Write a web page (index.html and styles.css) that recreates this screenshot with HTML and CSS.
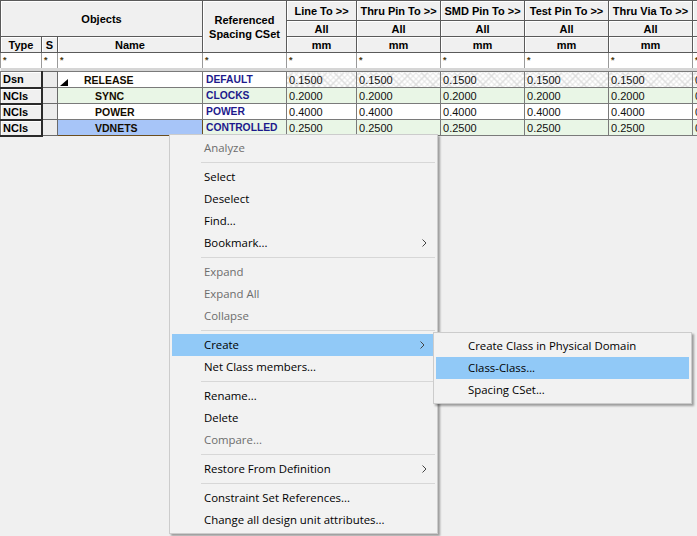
FILE: index.html
```html
<!DOCTYPE html>
<html lang="en">
<head>
    <meta charset="UTF-8">
    <title>Constraint Manager - Spacing</title>
    <link rel="stylesheet" href="styles.css">
</head>
<body>
<section class="sheet">
    <table class="grid">
        <colgroup>
            <col class="c-type"><col class="c-s"><col class="c-name"><col class="c-ref">
            <col class="c-line"><col class="c-val"><col class="c-val"><col class="c-val"><col class="c-val"><col class="c-val">
        </colgroup>
        <thead>
        <tr class="h-top">
            <th colspan="3" rowspan="2">Objects</th>
            <th rowspan="3" class="ref-head">Referenced<br>Spacing CSet</th>
            <th>Line To &gt;&gt;</th>
            <th>Thru Pin To &gt;&gt;</th>
            <th>SMD Pin To &gt;&gt;</th>
            <th>Test Pin To &gt;&gt;</th>
            <th>Thru Via To &gt;&gt;</th>
            <th></th>
        </tr>
        <tr class="h-mid">
            <th>All</th><th>All</th><th>All</th><th>All</th><th>All</th><th></th>
        </tr>
        <tr class="h-mid">
            <th>Type</th><th>S</th><th>Name</th>
            <th>mm</th><th>mm</th><th>mm</th><th>mm</th><th>mm</th><th></th>
        </tr>
        </thead>
        <tbody>
        <tr class="filter">
            <td>*</td><td>*</td><td>*</td><td>*</td><td>*</td><td>*</td><td>*</td><td>*</td><td>*</td><td>*</td>
        </tr>
        <tr class="gap"><td colspan="10"></td></tr>
        <tr class="row">
            <td class="type">Dsn</td><td class="s"></td>
            <td class="name lvl0"><svg class="twist" width="8" height="7" viewBox="0 0 8 7"><polygon points="8,0 8,7 0,7" fill="#000"/></svg>RELEASE</td>
            <td class="ref">DEFAULT</td>
            <td class="val hatch">0.1500</td><td class="val hatch">0.1500</td><td class="val hatch">0.1500</td><td class="val hatch">0.1500</td><td class="val hatch">0.1500</td><td class="val hatch">0</td>
        </tr>
        <tr class="row green">
            <td class="type">NCls</td><td class="s"></td>
            <td class="name lvl1">SYNC</td>
            <td class="ref">CLOCKS</td>
            <td class="val">0.2000</td><td class="val">0.2000</td><td class="val">0.2000</td><td class="val">0.2000</td><td class="val">0.2000</td><td class="val">0</td>
        </tr>
        <tr class="row">
            <td class="type">NCls</td><td class="s"></td>
            <td class="name lvl1">POWER</td>
            <td class="ref">POWER</td>
            <td class="val">0.4000</td><td class="val">0.4000</td><td class="val">0.4000</td><td class="val">0.4000</td><td class="val">0.4000</td><td class="val">0</td>
        </tr>
        <tr class="row green">
            <td class="type">NCls</td><td class="s"></td>
            <td class="name lvl1 picked">VDNETS</td>
            <td class="ref">CONTROLLED</td>
            <td class="val">0.2500</td><td class="val">0.2500</td><td class="val">0.2500</td><td class="val">0.2500</td><td class="val">0.2500</td><td class="val">0</td>
        </tr>
        </tbody>
    </table>
</section>

<div class="menu main-menu">
    <div class="item off">Analyze</div>
    <div class="sep"></div>
    <div class="item">Select</div>
    <div class="item">Deselect</div>
    <div class="item">Find...</div>
    <div class="item">Bookmark...<svg class="arrow" width="5" height="8" viewBox="0 0 5 8"><polyline points="0.5,0.5 4,4 0.5,7.5" fill="none" stroke="#444" stroke-width="1"/></svg></div>
    <div class="sep"></div>
    <div class="item off">Expand</div>
    <div class="item off">Expand All</div>
    <div class="item off">Collapse</div>
    <div class="sep"></div>
    <div class="item hot">Create<svg class="arrow" width="5" height="8" viewBox="0 0 5 8"><polyline points="0.5,0.5 4,4 0.5,7.5" fill="none" stroke="#444" stroke-width="1"/></svg></div>
    <div class="item">Net Class members...</div>
    <div class="sep"></div>
    <div class="item">Rename...</div>
    <div class="item">Delete</div>
    <div class="item off">Compare...</div>
    <div class="sep"></div>
    <div class="item">Restore From Definition<svg class="arrow" width="5" height="8" viewBox="0 0 5 8"><polyline points="0.5,0.5 4,4 0.5,7.5" fill="none" stroke="#444" stroke-width="1"/></svg></div>
    <div class="sep"></div>
    <div class="item">Constraint Set References...</div>
    <div class="item">Change all design unit attributes...</div>
</div>

<div class="menu sub-menu">
    <div class="item">Create Class in Physical Domain</div>
    <div class="item hot">Class-Class...</div>
    <div class="item">Spacing CSet...</div>
</div>
</body>
</html>
```

FILE: styles.css
```css
html, body{ margin: 0; height: 100%;}
body{ background: #f0f0f0; overflow: hidden; position: relative;
    font-family: "Liberation Sans", Arial, sans-serif;}

/* ---- grid ---- */
.sheet{ width: 697px; overflow: hidden;}
.grid{ border-collapse: collapse; table-layout: fixed; width: 776px; font-size: 11px;}
.c-type{ width: 41px;}
.c-s{ width: 16px;}
.c-name{ width: 145px;}
.c-ref{ width: 84px;}
.c-line{ width: 70px;}
.c-val{ width: 84px;}

.grid th, .grid td{ padding: 0 3px; overflow: hidden; white-space: nowrap; box-sizing: border-box;}

.grid th{ background: #f0f0f0; border: 1px solid #5a5a5a; font-weight: bold; color: #000;
    box-shadow: inset 1px 1px 0 #fff; text-align: center;}
.h-top th{ height: 20px; line-height: 18px;}
.h-mid th{ height: 16px; line-height: 14px;}
.h-top th[rowspan="2"]{ vertical-align: middle;}
.ref-head{ line-height: 14px !important; padding-top: 2px;}

.filter td{ height: 15px; background: #fff; border: 1px solid #9a9a9a; border-bottom: 0;
    font-size: 9px; font-weight: bold; line-height: 10px; vertical-align: top; color: #4a3a10; padding: 2px 2px 0;}
.gap td{ height: 4px; padding: 0; background: #d6d6d6; border: 0;}

.row td{ height: 16px; line-height: 14px; border: 1px solid #7a7a7a; background: #fff; color: #000;}
.row.green td{ background: #e9f6e6;}
.row td.type{ background: #f0f0f0; font-weight: bold; padding-left: 2px;
    border-right: 2px solid #2a2a2a; border-bottom: 2px solid #2a2a2a; box-shadow: inset 1px 1px 0 #fff;}
.row td.s{ background: #ececec; border-color: #6a6a6a;}
.row td.name{ font-weight: bold; color: #140c00; font-size: 10.5px;}
.name.lvl0{ padding-left: 2px;}
.name.lvl1{ padding-left: 37px;}
.twist{ vertical-align: -2px; margin-right: 16px;}
.row td.name.picked{ background: #a7c5f8; border: 1px solid #6b4e1e;}
.row td.ref{ font-weight: bold; color: #1c1a8c; font-size: 10.3px;}
.row td.val{ padding-left: 2px; color: #111;}
.row td.hatch{ background-color: #fff;
    background-image: repeating-linear-gradient(45deg, transparent 0 3px, #dcdcdc 3px 4px),
                      repeating-linear-gradient(-45deg, transparent 0 3px, #dcdcdc 3px 4px);}

/* ---- context menus ---- */
.menu{ position: absolute; background: #f2f2f2; border: 1px solid #cccccc; padding: 2px;
    box-shadow: 2px 2px 2px rgba(0,0,0,0.35);
    font-family: "Open Sans", "Noto Sans", sans-serif; font-size: 11.4px; color: #000;}
.main-menu{ left: 169px; top: 134px; width: 263px;}
.sub-menu{ left: 433px; top: 332px; width: 253px;}

.menu .item{ height: 22px; line-height: 22px; padding-left: 32px; position: relative; white-space: nowrap;}
.menu .item.off{ color: #6d6d6d;}
.menu .item.hot{ background: #91c9f7;}
.main-menu .item.hot{ margin-right: 2px;}
.menu .arrow{ position: absolute; right: 8px; top: 7px;}
.menu .sep{ height: 1px; background: #d7d7d7; margin: 3px 0 3px 29px;}
```
